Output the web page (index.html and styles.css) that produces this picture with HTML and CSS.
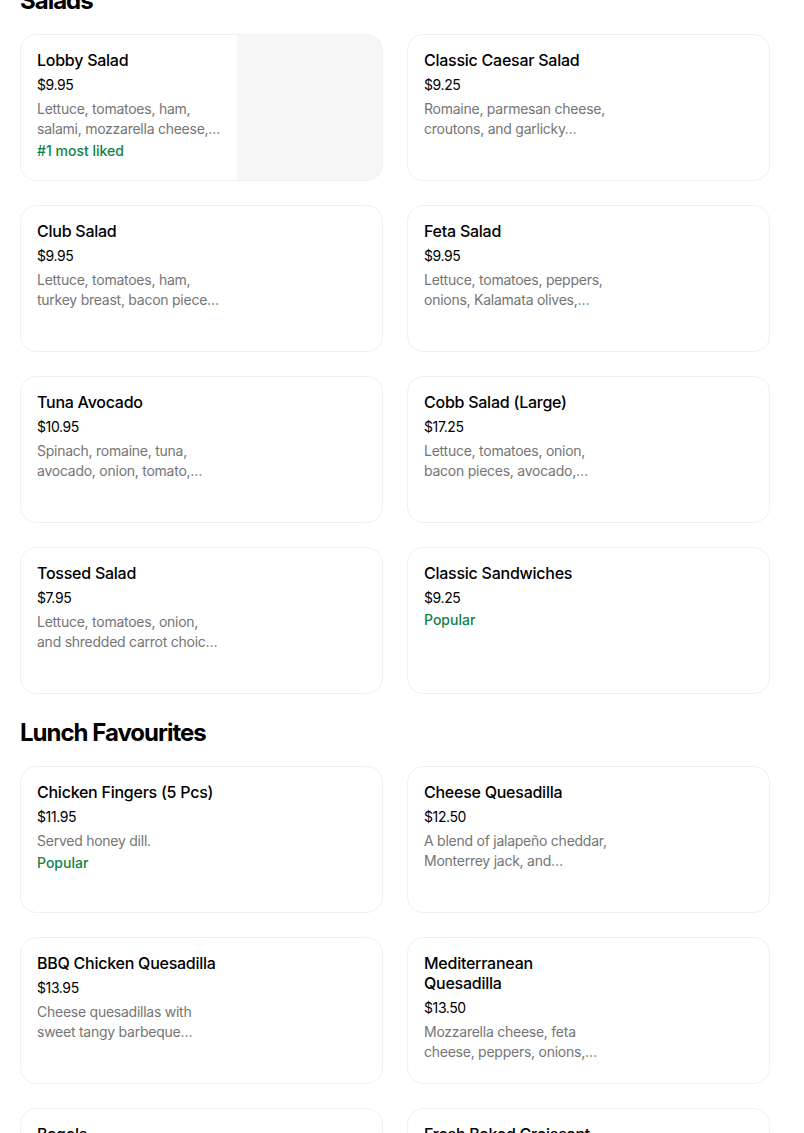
FILE: index.html
```html
<!DOCTYPE html>
<html lang="en">
<head>
<meta charset="utf-8">
<title>Menu</title>
<link rel="stylesheet" href="styles.css">
</head>
<body>
<main class="menu">
  <section class="section section-first">
    <h2 class="section-title">Salads</h2>
    <div class="grid">
      <article class="card">
        <div class="info">
          <h3 class="name">Lobby Salad</h3>
          <div class="price">$9.95</div>
          <p class="desc">Lettuce, tomatoes, ham, salami, mozzarella cheese,…</p>
          <div class="tag">#1 most liked</div>
        </div>
        <div class="thumb"></div>
      </article>
      <article class="card">
        <div class="info">
          <h3 class="name">Classic Caesar Salad</h3>
          <div class="price">$9.25</div>
          <p class="desc">Romaine, parmesan cheese, croutons, and garlicky…</p>
        </div>
      </article>
      <article class="card">
        <div class="info">
          <h3 class="name">Club Salad</h3>
          <div class="price">$9.95</div>
          <p class="desc">Lettuce, tomatoes, ham, turkey breast, bacon piece…</p>
        </div>
      </article>
      <article class="card">
        <div class="info">
          <h3 class="name">Feta Salad</h3>
          <div class="price">$9.95</div>
          <p class="desc">Lettuce, tomatoes, peppers, onions, Kalamata olives,…</p>
        </div>
      </article>
      <article class="card">
        <div class="info">
          <h3 class="name">Tuna Avocado</h3>
          <div class="price">$10.95</div>
          <p class="desc">Spinach, romaine, tuna, avocado, onion, tomato,…</p>
        </div>
      </article>
      <article class="card">
        <div class="info">
          <h3 class="name">Cobb Salad (Large)</h3>
          <div class="price">$17.25</div>
          <p class="desc">Lettuce, tomatoes, onion, bacon pieces, avocado,…</p>
        </div>
      </article>
      <article class="card">
        <div class="info">
          <h3 class="name">Tossed Salad</h3>
          <div class="price">$7.95</div>
          <p class="desc">Lettuce, tomatoes, onion, and shredded carrot choic…</p>
        </div>
      </article>
      <article class="card">
        <div class="info">
          <h3 class="name">Classic Sandwiches</h3>
          <div class="price">$9.25</div>
          <div class="tag">Popular</div>
        </div>
      </article>
    </div>
  </section>

  <section class="section">
    <h2 class="section-title">Lunch Favourites</h2>
    <div class="grid">
      <article class="card">
        <div class="info">
          <h3 class="name">Chicken Fingers (5 Pcs)</h3>
          <div class="price">$11.95</div>
          <p class="desc">Served honey dill.</p>
          <div class="tag">Popular</div>
        </div>
      </article>
      <article class="card">
        <div class="info">
          <h3 class="name">Cheese Quesadilla</h3>
          <div class="price">$12.50</div>
          <p class="desc">A blend of jalapeño cheddar, Monterrey jack, and…</p>
        </div>
      </article>
      <article class="card">
        <div class="info">
          <h3 class="name">BBQ Chicken Quesadilla</h3>
          <div class="price">$13.95</div>
          <p class="desc">Cheese quesadillas with sweet tangy barbeque…</p>
        </div>
      </article>
      <article class="card">
        <div class="info">
          <h3 class="name">Mediterranean Quesadilla</h3>
          <div class="price">$13.50</div>
          <p class="desc">Mozzarella cheese, feta cheese, peppers, onions,…</p>
        </div>
      </article>
      <article class="card">
        <div class="info">
          <h3 class="name">Bagels</h3>
          <div class="price">$3.50</div>
        </div>
      </article>
      <article class="card">
        <div class="info">
          <h3 class="name">Fresh Baked Croissant</h3>
          <div class="price">$3.95</div>
        </div>
      </article>
    </div>
  </section>
</main>
</body>
</html>
```

FILE: styles.css
```css
* {
  box-sizing: border-box;
}

html, body {
  margin: 0;
  padding: 0;
  background: #ffffff;
}

body {
  font-family: Inter, "Noto Sans", "Liberation Sans", sans-serif;
  color: #000000;
  overflow: hidden;
}

.menu {
  width: 750px;
  margin-left: 20px;
}

.section {
  margin-top: 23px;
}

.section-first {
  margin-top: -15px;
}

.section-title {
  margin: 0 0 17px 0;
  font-size: 24px;
  line-height: 32px;
  font-weight: 700;
  letter-spacing: -1px;
}

.grid {
  display: grid;
  grid-template-columns: 363px 363px;
  column-gap: 24px;
  row-gap: 24px;
}

.card {
  display: flex;
  height: 147px;
  border: 1px solid #f0f0f0;
  border-radius: 16px;
  overflow: hidden;
  background: #ffffff;
}

.info {
  width: 216px;
  padding: 15px 13px 0 16px;
  flex-shrink: 0;
}

.thumb {
  flex: 1;
  background: #f6f6f6;
}

.name {
  margin: 0;
  font-size: 16px;
  line-height: 20px;
  font-weight: 500;
  letter-spacing: -0.25px;
}

.price {
  margin-top: 5px;
  font-size: 14px;
  line-height: 20px;
  font-weight: 400;
  letter-spacing: -0.4px;
}

.desc {
  margin: 4px 0 0 0;
  font-size: 14px;
  line-height: 20px;
  color: #757575;
  letter-spacing: -0.25px;
  display: -webkit-box;
  -webkit-line-clamp: 2;
  -webkit-box-orient: vertical;
  overflow: hidden;
}

.tag {
  margin-top: 2px;
  font-size: 14px;
  line-height: 20px;
  font-weight: 500;
  color: #0e8345;
}
```
